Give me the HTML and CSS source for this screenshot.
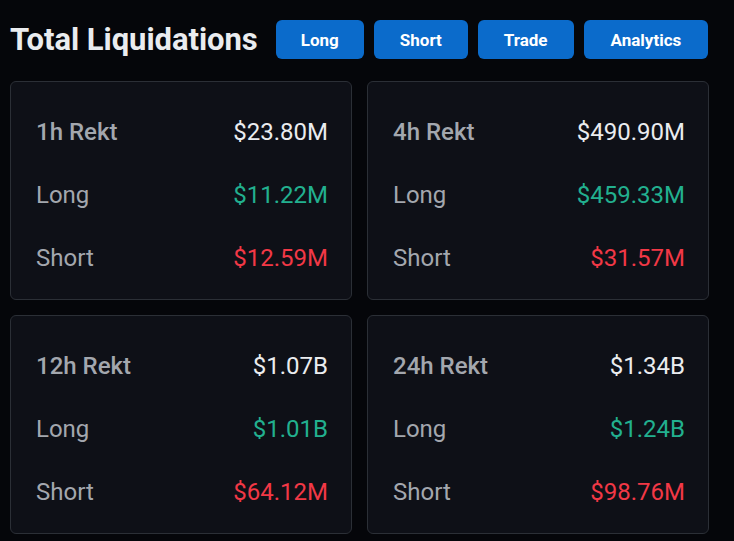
FILE: index.html
```html
<!DOCTYPE html>
<html>
<head>
<meta charset="utf-8">
<link rel="stylesheet" href="styles.css">
</head>
<body>
<div class="page">
  <header class="header">
    <h1 class="title">Total Liquidations</h1>
    <nav class="actions">
      <button class="btn btn-long">Long</button>
      <button class="btn">Short</button>
      <button class="btn">Trade</button>
      <button class="btn btn-wide">Analytics</button>
    </nav>
  </header>
  <main class="grid">
    <section class="card">
      <div class="row"><span class="label head">1h Rekt</span><span class="val total">$23.80M</span></div>
      <div class="row"><span class="label">Long</span><span class="val up">$11.22M</span></div>
      <div class="row"><span class="label">Short</span><span class="val down">$12.59M</span></div>
    </section>
    <section class="card">
      <div class="row"><span class="label head">4h Rekt</span><span class="val total">$490.90M</span></div>
      <div class="row"><span class="label">Long</span><span class="val up">$459.33M</span></div>
      <div class="row"><span class="label">Short</span><span class="val down">$31.57M</span></div>
    </section>
    <section class="card">
      <div class="row"><span class="label head">12h Rekt</span><span class="val total">$1.07B</span></div>
      <div class="row"><span class="label">Long</span><span class="val up">$1.01B</span></div>
      <div class="row"><span class="label">Short</span><span class="val down">$64.12M</span></div>
    </section>
    <section class="card">
      <div class="row"><span class="label head">24h Rekt</span><span class="val total">$1.34B</span></div>
      <div class="row"><span class="label">Long</span><span class="val up">$1.24B</span></div>
      <div class="row"><span class="label">Short</span><span class="val down">$98.76M</span></div>
    </section>
  </main>
</div>
</body>
</html>
```
FILE: styles.css
```css
html, body {
  margin: 0;
  padding: 0;
  background: #05060a;
}
body {
  font-family: "Roboto", "Noto Sans", sans-serif;
  color: #eaecef;
}
.page {
  width: 724px;
  padding: 20px 0 0 10px;
}
.header {
  display: flex;
  align-items: center;
  height: 39px;
  gap: 18px;
}
.title {
  margin: 0;
  flex-shrink: 0;
  white-space: nowrap;
  font-size: 31px;
  font-weight: 700;
  color: #eaecef;
  letter-spacing: -0.05px;
}
.actions {
  display: flex;
  flex-shrink: 0;
  gap: 10px;
}
.btn {
  height: 39px;
  border: none;
  border-radius: 6px;
  background: #0b6bcb;
  color: #ffffff;
  font-family: inherit;
  font-size: 17px;
  font-weight: 700;
  padding: 0 26px;
}
.btn-long {
  padding: 0 25px;
}
.btn-wide {
  padding: 0 27px;
}
.grid {
  margin-top: 22px;
  display: grid;
  grid-template-columns: 342px 342px;
  grid-auto-rows: 219px;
  gap: 15px 15px;
}
.card {
  box-sizing: border-box;
  background: #0e1017;
  border: 1px solid #2b2f36;
  border-radius: 6px;
  padding: 19px 23px 10px 25px;
  display: flex;
  flex-direction: column;
}
.row {
  height: 63px;
  display: flex;
  align-items: center;
  justify-content: space-between;
}
.label {
  font-size: 24px;
  color: #a3a7ae;
}
.label.head {
  font-weight: 500;
}
.val {
  font-size: 24px;
}
.total { color: #eaecef; }
.up { color: #22b08f; }
.down { color: #f23846; }
```
